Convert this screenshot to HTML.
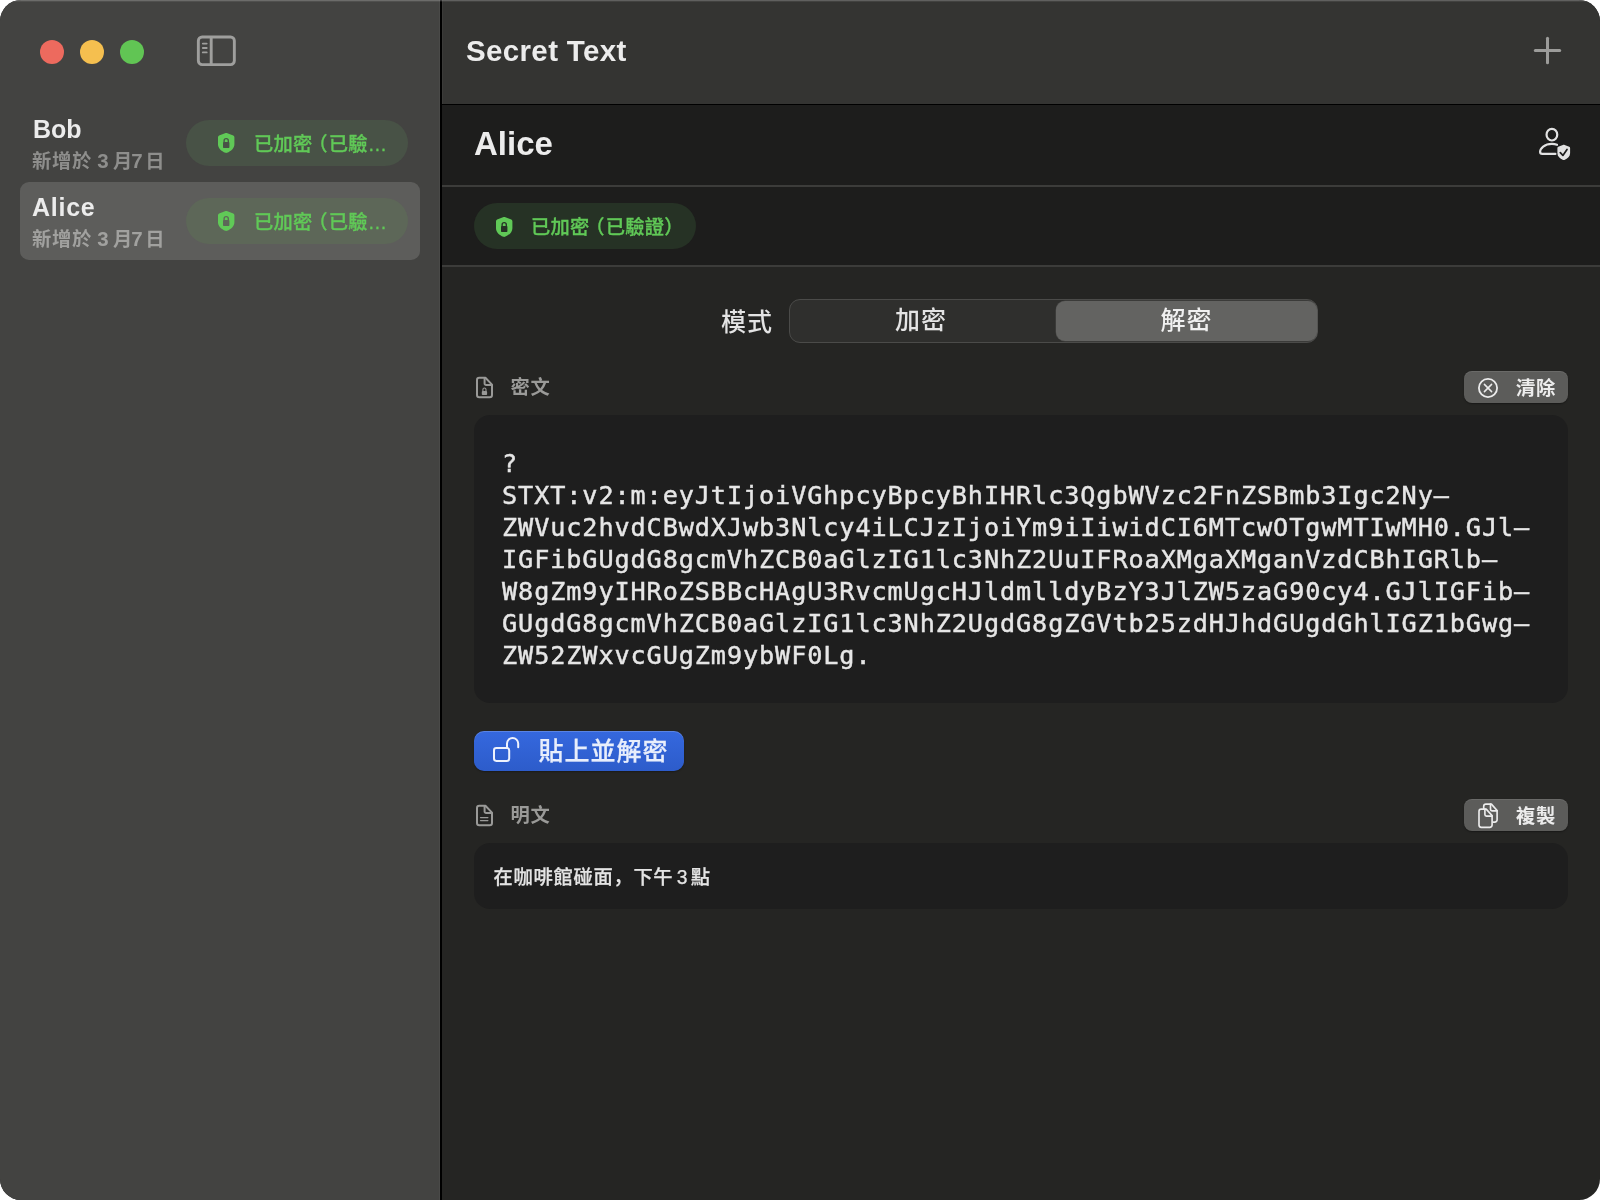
<!DOCTYPE html>
<html lang="zh-Hant">
<head>
<meta charset="utf-8">
<title>Secret Text</title>
<style>
*{margin:0;padding:0;box-sizing:border-box}
html,body{width:1600px;height:1200px;background:#fff;overflow:hidden}
body{font-family:"Liberation Sans","Noto Sans CJK TC",sans-serif;color:#e6e6e6;-webkit-font-smoothing:antialiased}
.abs{position:absolute}
#win{will-change:transform;position:absolute;left:0;top:0;width:1600px;height:1200px;border-radius:21px;overflow:hidden;background:#252523}
#sidebar{left:0;top:0;width:440px;height:1200px;background:#434341;border-right:1px solid #4a4a48}
#vline{left:440px;top:0;width:2px;height:1200px;background:#000}
#titlebar{left:442px;top:0;width:1158px;height:104px;background:#343432;border-left:1px solid #3b3b39}
#tline{left:442px;top:104px;width:1158px;height:1px;background:#000}
#header{left:442px;top:105px;width:1158px;height:160px;background:#1d1d1c}
.hline{left:442px;width:1158px;height:2px;background:#3c3c3a}
#tophl{left:0;top:0;width:1600px;height:1px;background:rgba(255,255,255,.22)}
.tl{width:24px;height:24px;border-radius:50%;top:40px}
.name{left:33px;font-weight:bold;font-size:25px;line-height:30px;color:#ececec;white-space:nowrap}
.sub{left:32px;font-size:19.3px;letter-spacing:.7px;line-height:24px;color:#8e8e8c;white-space:nowrap;font-weight:700}
.sub b{font-weight:700;font-size:20.5px;letter-spacing:0}
.badge{height:46px;width:222px;border-radius:23px}
.btxt{font-size:19.3px;letter-spacing:.2px;line-height:24px;color:#60c957;white-space:nowrap;font-weight:500;-webkit-text-stroke:.3px #60c957}
.btxt i{font-style:normal;margin-left:-4.1px;margin-right:1px}
.btxt u{text-decoration:none;margin-right:-5.6px}
#rowsel{left:20px;top:182px;width:400px;height:78px;border-radius:9px;background:#5d5d5b}
.lbl{font-size:19.3px;letter-spacing:.7px;line-height:24px;color:#9a9a98;font-weight:700;white-space:nowrap}
.box{left:474px;width:1094px;border-radius:16px;background:#1e1e1e}
.gbtn{left:1464px;width:104px;height:32px;border-radius:8px;background:#5c5c5a;box-shadow:0 1px 1.5px rgba(0,0,0,.35), inset 0 1px 0 rgba(255,255,255,.09)}
.gbtn span{position:absolute;left:52px;top:6px;font-size:19.3px;letter-spacing:.7px;line-height:24px;color:#ececec;font-weight:700;white-space:nowrap}
#mono{left:502px;top:448px;font-family:"DejaVu Sans Mono","Liberation Mono",monospace;font-size:25.2px;letter-spacing:.9px;line-height:32px;color:#e6e6e6;white-space:pre;-webkit-text-stroke:.45px #e6e6e6}
</style>
</head>
<body>
<div id="win">
  <div id="sidebar" class="abs"></div>
  <div id="vline" class="abs"></div>
  <div id="titlebar" class="abs"></div>
  <div id="tline" class="abs"></div>
  <div id="header" class="abs"></div>
  <div class="abs hline" style="top:185px"></div>
  <div class="abs hline" style="top:265px"></div>
  <div id="tophl" class="abs"></div>
  <div class="abs" style="left:0;top:1px;width:1600px;height:1px;background:rgba(255,255,255,.07)"></div>

  <!-- traffic lights -->
  <div class="abs tl" style="left:40px;background:#ed6a5e"></div>
  <div class="abs tl" style="left:80px;background:#f5bf4f"></div>
  <div class="abs tl" style="left:120px;background:#61c554"></div>

  <!-- sidebar toggle icon -->
  <svg class="abs" style="left:194px;top:33px" width="44" height="36" viewBox="0 0 44 36">
    <rect x="4.35" y="3.95" width="36" height="27.7" rx="3.8" fill="none" stroke="#9f9f9d" stroke-width="2.9"/>
    <line x1="17.2" y1="4" x2="17.2" y2="31.6" stroke="#9f9f9d" stroke-width="2.9"/>
    <g stroke="#9f9f9d" stroke-width="1.9" stroke-linecap="round"><line x1="8.85" y1="10.6" x2="12.65" y2="10.6"/><line x1="8.85" y1="15" x2="12.65" y2="15"/><line x1="8.85" y1="19.4" x2="12.65" y2="19.4"/></g>
  </svg>

  <!-- sidebar rows -->
  <div id="rowsel" class="abs"></div>
  <div class="abs name" style="top:113.5px">Bob</div>
  <div class="abs sub" style="top:148.5px">新增於<b style="margin-left:5.2px">3</b><b style="margin-left:4.5px;font-size:19.3px">月</b><b style="margin-left:-1.2px">7</b><b style="margin-left:2.7px;font-size:19.3px">日</b></div>
  <div class="abs badge" style="left:186px;top:120px;background:#485246"></div>
  <div class="abs btxt" style="left:254px;top:132.5px">已加密<i>（</i>已驗…</div>

  <div class="abs name" style="top:191.5px;left:32px;letter-spacing:.75px">Alice</div>
  <div class="abs sub" style="top:226.5px;color:#a1a19f">新增於<b style="margin-left:5.2px">3</b><b style="margin-left:4.5px;font-size:19.3px">月</b><b style="margin-left:-1.2px">7</b><b style="margin-left:2.7px;font-size:19.3px">日</b></div>
  <div class="abs badge" style="left:186px;top:198px;background:#5d6758"></div>
  <div class="abs btxt" style="left:254px;top:210.5px">已加密<i>（</i>已驗…</div>

  <!-- title bar -->
  <div class="abs" style="left:466px;top:33px;font-size:29.5px;letter-spacing:.35px;line-height:36px;font-weight:bold;color:#ececec;white-space:nowrap">Secret Text</div>
  <svg class="abs" style="left:1528px;top:31px" width="40" height="40" viewBox="0 0 40 40"><g stroke="#9c9c9a" stroke-width="3" stroke-linecap="round"><line x1="7.3" y1="19.500" x2="31.7" y2="19.500"/><line x1="19.500" y1="7.3" x2="19.500" y2="31.7"/></g></svg>

  <!-- header -->
  <div class="abs" style="left:474px;top:124px;font-size:33px;line-height:40px;font-weight:bold;color:#ececec;white-space:nowrap">Alice</div>
  <div class="abs badge" style="left:474px;top:203px;background:#263225"></div>
  <div class="abs btxt" style="left:531px;top:215.5px">已加密<i>（</i>已驗證<u>）</u></div>

  <!-- mode -->
  <div class="abs" style="left:721px;top:305.5px;font-weight:500;font-size:25px;letter-spacing:1px;line-height:32px;color:#e4e4e4;white-space:nowrap">模式</div>
  <div class="abs" style="left:789px;top:299px;width:529px;height:44px;border-radius:11px;background:#2f2f2d;border:1px solid #4b4b49"></div>
  <div class="abs" style="left:1055.5px;top:301px;width:261.5px;height:40px;border-radius:9px;background:#636361;box-shadow:0 0 0 0.5px rgba(255,255,255,.12)"></div>
  <div class="abs" style="left:895px;top:304px;font-weight:500;font-size:25px;letter-spacing:1px;line-height:32px;color:#e4e4e4;white-space:nowrap">加密</div>
  <div class="abs" style="left:1160.5px;top:304px;font-weight:500;font-size:25px;letter-spacing:1px;line-height:32px;color:#f0f0f0;white-space:nowrap">解密</div>

  <!-- cipher -->
  <div class="abs lbl" style="left:510.5px;top:376px">密文</div>
  <div class="abs gbtn" style="top:371px"><span>清除</span></div>
  <div class="abs box" style="top:415px;height:288px"></div>
  <div id="mono" class="abs">?
STXT:v2:m:eyJtIjoiVGhpcyBpcyBhIHRlc3QgbWVzc2FnZSBmb3Igc2Ny–
ZWVuc2hvdCBwdXJwb3Nlcy4iLCJzIjoiYm9iIiwidCI6MTcwOTgwMTIwMH0.GJl–
IGFibGUgdG8gcmVhZCB0aGlzIG1lc3NhZ2UuIFRoaXMgaXMganVzdCBhIGRlb–
W8gZm9yIHRoZSBBcHAgU3RvcmUgcHJldmlldyBzY3JlZW5zaG90cy4.GJlIGFib–
GUgdG8gcmVhZCB0aGlzIG1lc3NhZ2UgdG8gZGVtb25zdHJhdGUgdGhlIGZ1bGwg–
ZW52ZWxvcGUgZm9ybWF0Lg.</div>

  <!-- button -->
  <div class="abs" style="left:474px;top:731px;width:210px;height:40px;border-radius:10px;background:linear-gradient(#3568de,#2d5cca);box-shadow:inset 0 1px 0 rgba(255,255,255,.18),0 1px 1.5px rgba(0,0,0,.3)"></div>
  <div class="abs" style="left:538.5px;top:734.5px;font-size:25px;letter-spacing:1px;line-height:32px;color:#e8eefc;font-weight:500;-webkit-text-stroke:.25px #e8eefc;white-space:nowrap">貼上並解密</div>

  <!-- plain -->
  <div class="abs lbl" style="left:510.5px;top:804px">明文</div>
  <div class="abs gbtn" style="top:799px"><span>複製</span></div>
  <div class="abs box" style="top:843px;height:66px"></div>
  <div class="abs" style="left:493.5px;top:863.5px;font-size:19.3px;letter-spacing:.7px;line-height:24px;color:#e4e4e4;white-space:nowrap;font-weight:500;-webkit-text-stroke:.25px #e4e4e4">在咖啡館碰面<span lang="zh-Hans" style="font-family:'Noto Sans CJK SC',sans-serif">，</span>下午<span style="margin-left:3.4px">3</span><span style="margin-left:2.5px">點</span></div>

  <svg class="abs" style="left:217.9px;top:133px" width="18" height="21" viewBox="0 0 18 21"><path fill="#60c957" fill-rule="evenodd" d="M8.2 0C8.6 0 9 .1 9.4 .25L15.3 2.6C16 2.9 16.4 3.5 16.4 4.3V11.2C16.4 15.2 13.1 18.1 9 19.85C8.5 20.05 7.9 20.05 7.4 19.85C3.3 18.1 0 15.2 0 11.2V4.3C0 3.5 .4 2.9 1.1 2.6L7 .25C7.4 .1 7.8 0 8.2 0ZM5.45 9.1V7.7a2.75 2.75 0 0 1 5.5 0V9.1H9.65V7.7a1.45 1.45 0 0 0 -2.9 0V9.1ZM5.7 9H10.7Q11.4 9 11.4 9.7V14.2Q11.4 14.9 10.7 14.9H5.7Q5 14.9 5 14.2V9.7Q5 9 5.7 9Z"/></svg>
  <svg class="abs" style="left:217.9px;top:211px" width="18" height="21" viewBox="0 0 18 21"><path fill="#60c957" fill-rule="evenodd" d="M8.2 0C8.6 0 9 .1 9.4 .25L15.3 2.6C16 2.9 16.4 3.5 16.4 4.3V11.2C16.4 15.2 13.1 18.1 9 19.85C8.5 20.05 7.9 20.05 7.4 19.85C3.3 18.1 0 15.2 0 11.2V4.3C0 3.5 .4 2.9 1.1 2.6L7 .25C7.4 .1 7.8 0 8.2 0ZM5.45 9.1V7.7a2.75 2.75 0 0 1 5.5 0V9.1H9.65V7.7a1.45 1.45 0 0 0 -2.9 0V9.1ZM5.7 9H10.7Q11.4 9 11.4 9.7V14.2Q11.4 14.9 10.7 14.9H5.7Q5 14.9 5 14.2V9.7Q5 9 5.7 9Z"/></svg>
  <svg class="abs" style="left:495.7px;top:216.6px" width="18" height="21" viewBox="0 0 18 21"><path fill="#60c957" fill-rule="evenodd" d="M8.2 0C8.6 0 9 .1 9.4 .25L15.3 2.6C16 2.9 16.4 3.5 16.4 4.3V11.2C16.4 15.2 13.1 18.1 9 19.85C8.5 20.05 7.9 20.05 7.4 19.85C3.3 18.1 0 15.2 0 11.2V4.3C0 3.5 .4 2.9 1.1 2.6L7 .25C7.4 .1 7.8 0 8.2 0ZM5.45 9.1V7.7a2.75 2.75 0 0 1 5.5 0V9.1H9.65V7.7a1.45 1.45 0 0 0 -2.9 0V9.1ZM5.7 9H10.7Q11.4 9 11.4 9.7V14.2Q11.4 14.9 10.7 14.9H5.7Q5 14.9 5 14.2V9.7Q5 9 5.7 9Z"/></svg>
  <svg class="abs" style="left:1530px;top:120px" width="48" height="48" viewBox="1530 120 48 48"><g fill="none" stroke="#e2e2e2" stroke-width="2.2" stroke-linecap="round"><ellipse cx="1551.9" cy="134.65" rx="5.35" ry="5.85"/><path d="M1555.4 153.9H1542.3c-1.5 0-2.2-.8-2.2-1.9c0-3.6 4.3-8.1 11.8-8.1c2 0 3.7 .35 5.1 .9"/></g><path fill="#e2e2e2" d="M1563.75 144.7c.3 0 .6 .05 .9 .2l4.6 1.8c.55 .2 .85 .7 .85 1.3v5.2c0 3.1-2.5 5.3-5.7 6.75c-.4 .2-.9 .2-1.3 0c-3.200-1.45-5.700-3.65-5.700-6.75v-5.200c0-.6 .3-1.100 .850-1.300l4.600-1.800c.3-.15 .6-.2 .9-.2z"/><path fill="none" stroke="#1d1d1c" stroke-width="1.7" stroke-linecap="round" stroke-linejoin="round" d="M1560.3 152.7l2.600 2.700l4.100-5.900"/></svg>
  <svg class="abs" style="left:474px;top:374px" width="22" height="28" viewBox="0 0 22 28"><path d="M11.4 3.8H5.3a2.300 2.300 0 0 0-2.300 2.300V20.9a2.300 2.300 0 0 0 2.300 2.300H15.700a2.300 2.300 0 0 0 2.300-2.300V10.600Z" fill="none" stroke="#9a9a98" stroke-width="2" stroke-linejoin="round"/><path d="M10.600 3.800V9.400a1.600 1.600 0 0 0 1.600 1.600H18" fill="none" stroke="#9a9a98" stroke-width="2" stroke-linejoin="round"/><rect x="7.8" y="17.1" width="5.3" height="3.9" rx=".8" fill="#9a9a98"/><path d="M8.9 17.3V15.600a1.550 1.550 0 0 1 3.100 0V17.3" fill="none" stroke="#9a9a98" stroke-width="1.1"/></svg>
  <svg class="abs" style="left:474px;top:802px" width="22" height="28" viewBox="0 0 22 28"><path d="M11.4 3.8H5.3a2.300 2.300 0 0 0-2.300 2.300V20.9a2.300 2.300 0 0 0 2.300 2.300H15.700a2.300 2.300 0 0 0 2.300-2.300V10.600Z" fill="none" stroke="#9a9a98" stroke-width="2" stroke-linejoin="round"/><path d="M10.600 3.800V9.400a1.600 1.600 0 0 0 1.600 1.600H18" fill="none" stroke="#9a9a98" stroke-width="2" stroke-linejoin="round"/><path d="M6.500 15.500H13.900M6.500 18.500H13.900" fill="none" stroke="#9a9a98" stroke-width="1.250" stroke-linecap="round"/></svg>
  <svg class="abs" style="left:1470px;top:368px" width="40" height="40" viewBox="0 0 40 40"><circle cx="18" cy="20" r="9.1" fill="none" stroke="#ececec" stroke-width="1.8"/><g stroke="#ececec" stroke-width="1.5" stroke-linecap="round" shape-rendering="geometricPrecision"><line x1="14.4" y1="16.4" x2="21.6" y2="23.6"/><line x1="21.6" y1="16.4" x2="14.4" y2="23.6"/></g></svg>
  <svg class="abs" style="left:1470px;top:796px" width="40" height="40" viewBox="0 0 40 40"><g fill="none" stroke="#ececec" stroke-width="1.65" stroke-linejoin="round" stroke-linecap="round"><path d="M16.200 13.100H11.300a2.300 2.300 0 0 0-2.300 2.300V29a2.300 2.300 0 0 0 2.300 2.300H19.800a2.300 2.300 0 0 0 2.300-2.300V19.600Z"/><path d="M14.900 13.100V18.600a1.500 1.500 0 0 0 1.500 1.500H22.100"/><path d="M13.700 12.300V10.400a2.300 2.300 0 0 1 2.300-2.300H21.400L27.100 14.500V23.800a2.300 2.300 0 0 1-2.300 2.300H23"/><path d="M20.500 8.100V13.300a1.500 1.500 0 0 0 1.500 1.500H27.100"/></g></svg>
  <svg class="abs" style="left:484px;top:728px" width="44" height="44" viewBox="0 0 44 44"><g fill="none" stroke="#eef2fd" stroke-width="2" stroke-linecap="round"><rect x="10" y="20.100" width="15.200" height="12.800" rx="2.300"/><path d="M23 20V15.600a5.600 5.600 0 0 1 11.200 0V19.200"/></g></svg>
</div>
</body>
</html>
